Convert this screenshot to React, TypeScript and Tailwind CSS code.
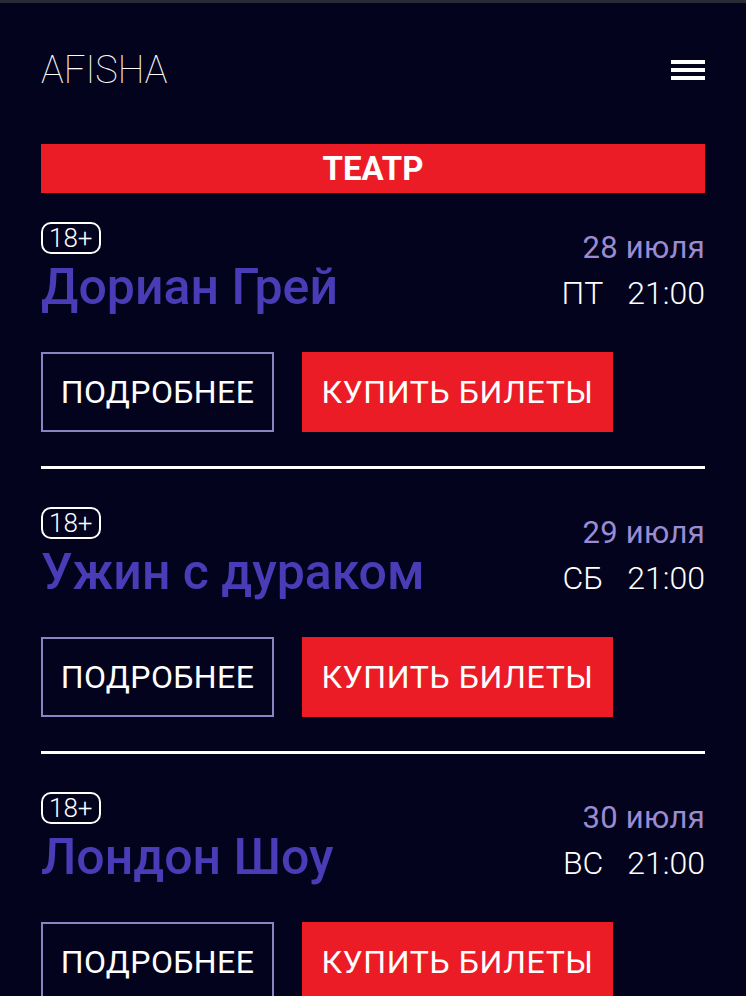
const events = [
  { title: 'Дориан Грей', date: '28 июля', day: 'ПТ', time: '21:00' },
  { title: 'Ужин с дураком', date: '29 июля', day: 'СБ', time: '21:00' },
  { title: 'Лондон Шоу', date: '30 июля', day: 'ВС', time: '21:00' },
];

function MenuIcon() {
  return (
    <div className="flex w-[34px] flex-col gap-[4px]">
      <span className="h-[4px] bg-white" />
      <span className="h-[4px] bg-white" />
      <span className="h-[4px] bg-white" />
    </div>
  );
}

function EventRow({ title, date, day, time }: (typeof events)[number]) {
  return (
    <div className="flex flex-col">
      <div className="flex items-start justify-between">
        <div className="flex flex-col items-start">
          <span className="flex h-[32px] items-center rounded-[10px] border-2 border-white px-[6px] text-[26px] font-light leading-none text-white">
            18+
          </span>
          <h3 className="mt-[8px] text-[50px] font-medium leading-none text-[#4a3cb6]">{title}</h3>
        </div>
        <div className="mt-[10px] flex flex-col items-end">
          <span className="text-[31px] leading-none tracking-[0.3px] text-[#9a8bd2]">{date}</span>
          <span className="mt-[14px] flex text-[32px] font-light leading-none text-white">
            <span>{day}</span>
            <span className="ml-[24px]">{time}</span>
          </span>
        </div>
      </div>
      <div className="mt-[40px] flex gap-[28px]">
        <button className="flex h-[80px] w-[233px] items-center justify-center border-2 border-[#8c84c2] text-[32px] tracking-[0.4px] text-white">
          ПОДРОБНЕЕ
        </button>
        <button className="flex h-[80px] w-[311px] items-center justify-center bg-[#ec1c26] text-[32px] tracking-[0.6px] text-white">
          КУПИТЬ БИЛЕТЫ
        </button>
      </div>
    </div>
  );
}

export default function App() {
  return (
    <div
      className="min-h-screen border-t-[3px] border-[#2b2b38] bg-[#04031d] px-[41px]"
      style={{ fontFamily: 'Roboto, "Liberation Sans", sans-serif' }}
    >
      <header className="flex h-[133px] items-center justify-between">
        <span className="text-[38px] font-thin leading-none text-white">AFISHA</span>
        <MenuIcon />
      </header>
      <div className="mt-[8px] flex h-[49px] items-center justify-center bg-[#ec1c26] text-[33px] font-bold text-white">
        ТЕАТР
      </div>
      <div className="mt-[29px] flex flex-col">
        {events.map((ev, i) => (
          <div key={ev.title} className="flex flex-col">
            <EventRow {...ev} />
            {i < events.length - 1 && <div className="mb-[38px] mt-[34px] h-[3px] bg-white" />}
          </div>
        ))}
      </div>
    </div>
  );
}
